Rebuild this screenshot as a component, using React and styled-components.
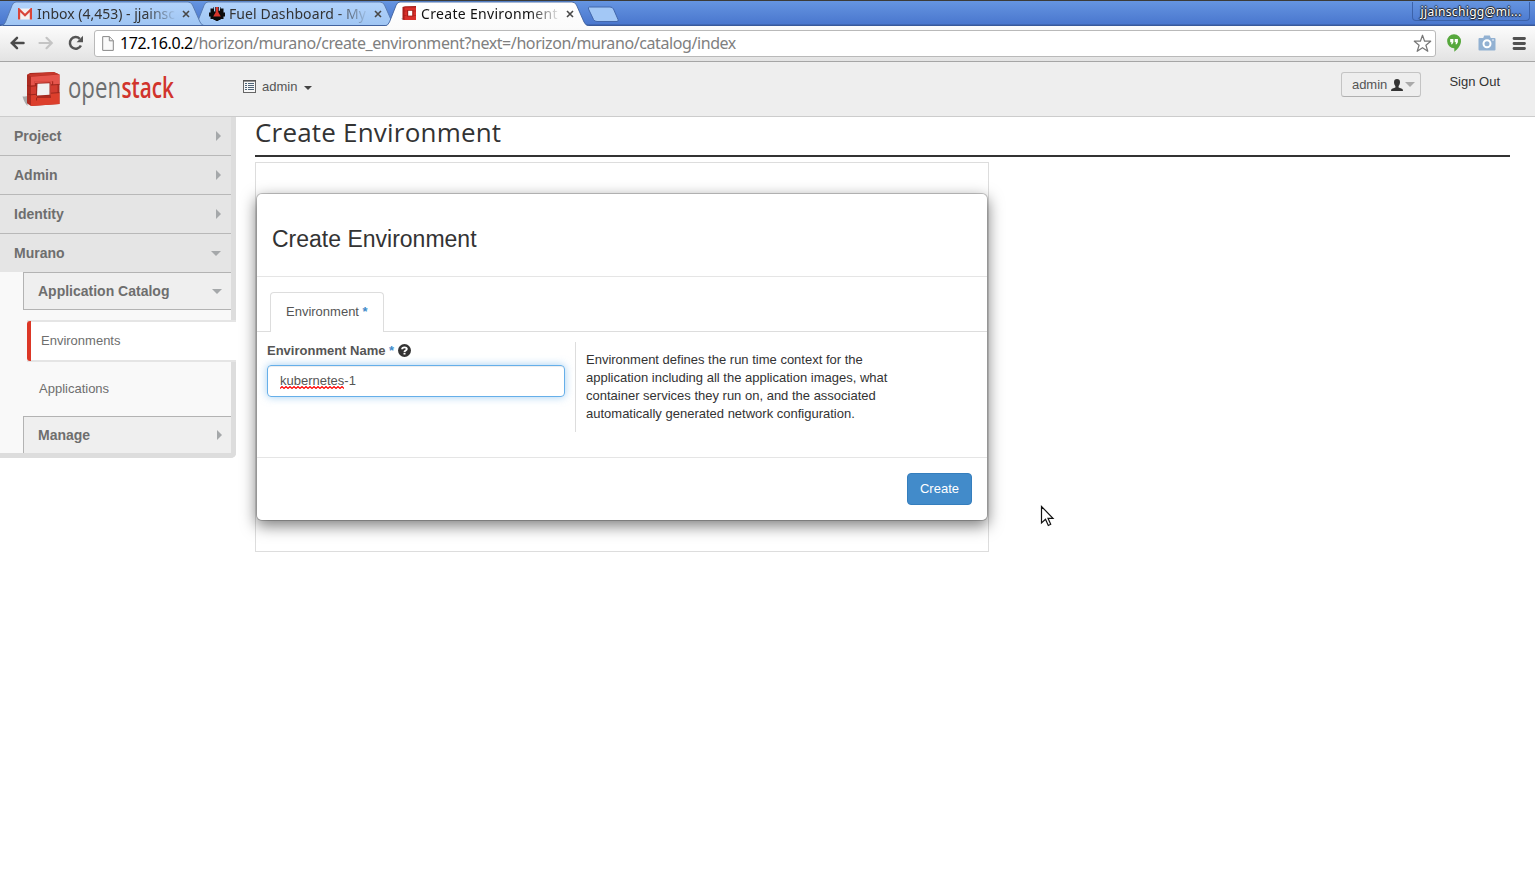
import React from 'react';
import styled, { createGlobalStyle, css } from 'styled-components';

const GlobalStyle = createGlobalStyle`
  *, *::before, *::after { box-sizing: border-box; }
  html, body { margin: 0; padding: 0; background: #fff; }
  body {
    font: 13px/18px "Liberation Sans", Arial, sans-serif;
    color: #333;
    overflow: hidden;
  }
`;

const Screen = styled.div`
  position: relative;
  display: flex;
  flex-direction: column;
  width: 1535px;
  height: 877px;
  overflow: hidden;
  background: #fff;
`;

/* ---------- Browser chrome ---------- */

const TabStrip = styled.div`
  display: flex;
  justify-content: space-between;
  height: 26px;
  padding: 0 5px 0 3px;
  border-top: 1px solid #3c3b37;
  background: linear-gradient(#6595e1, #4a77ce 92%, #38599b 96%);
`;

const Tabs = styled.div`
  display: flex;
`;

const Tab = styled.div`
  position: relative;
  z-index: ${(p) => p.$z};
  display: flex;
  align-items: center;
  width: 204px;
  height: 25px;
  margin-right: -12px;
  padding-left: 14px;
`;

const TabShape = styled.svg`
  position: absolute;
  left: -2px;
  top: 0;
`;

const TabIcon = styled.span`
  position: relative;
  display: flex;
  justify-content: center;
  width: 16px;
  margin-right: 4px;
`;

const TabTitle = styled.span`
  position: relative;
  width: 141px;
  white-space: nowrap;
  font: 14px/20px "Noto Sans", sans-serif;
  letter-spacing: ${(p) => p.$spacing}px;
  color: ${(p) => (p.$active ? '#111' : '#333')};
  mask-image: linear-gradient(90deg, #000 108px, transparent 140px);
`;

const TabClose = styled.svg`
  position: relative;
  margin-left: 4px;
`;

const NewTab = styled.svg`
  margin: 5px 0 0 7px;
`;

const Profile = styled.div`
  height: 19px;
  width: 118px;
  margin-top: 1px;
  border: 1px solid #3c62a9;
  border-top: 0;
  border-radius: 0 0 4px 4px;
  text-align: center;
  white-space: nowrap;
  font: 12px/20px "Noto Sans", sans-serif;
  letter-spacing: 0.35px;
  color: #fff;
  text-shadow: 1px 0 1px #222, -1px 0 1px #222, 0 1px 1px #222, 0 -1px 1px #222;
`;

const Toolbar = styled.div`
  display: flex;
  align-items: center;
  height: 36px;
  padding: 0 8px 0 9px;
  border-bottom: 1px solid #a5a5a5;
  background: linear-gradient(#fcfcfc, #e3e3e3);
`;

const NavButton = styled.span`
  display: flex;
  width: 18px;
  margin: -1px ${(p) => p.$gap}px 0 0;
`;

const AddressBar = styled.div`
  display: flex;
  align-items: center;
  width: 1342px;
  height: 27px;
  padding: 0 3px 0 7px;
  border: 1px solid #b9b9b9;
  border-radius: 3px;
  background: #fff;
`;

const Url = styled.span`
  flex: 1;
  margin: -2px 0 0 6px;
  white-space: nowrap;
  font: 16px/22px "Noto Sans", sans-serif;
  letter-spacing: -0.41px;
  color: #808080;
`;

const Host = styled.span`
  color: #000;
`;

const Extensions = styled.div`
  display: flex;
  flex: 1;
  align-items: center;
  justify-content: space-between;
  padding: 0 1px 1px 11px;
`;

/* ---------- Dashboard header ---------- */

const Header = styled.header`
  display: flex;
  height: 55px;
  border-bottom: 1px solid #ccc;
  background: #eee;
`;

const Logo = styled.svg`
  margin: 8px 0 0 22px;
`;

const ProjectPicker = styled.div`
  display: flex;
  align-items: center;
  height: 20px;
  margin: 14px 0 0 65px;
  line-height: 20px;
  color: #555;
`;

const PickerName = styled.span`
  margin: 2px 7px 0 6px;
`;

const Caret = styled.span`
  width: 0;
  height: 0;
  ${(p) =>
    p.$right
      ? css`
          border-top: ${p.$size}px solid transparent;
          border-bottom: ${p.$size}px solid transparent;
          border-left: ${p.$size}px solid ${p.$color};
        `
      : css`
          border-left: ${p.$size}px solid transparent;
          border-right: ${p.$size}px solid transparent;
          border-top: ${p.$size}px solid ${p.$color};
        `}
`;

const PickerCaret = styled(Caret)`
  margin-top: 3px;
`;

const UserArea = styled.div`
  display: flex;
  align-items: flex-start;
  margin-left: auto;
  padding: 10px 35px 0 0;
`;

const UserButton = styled.div`
  display: flex;
  align-items: center;
  width: 80px;
  height: 25px;
  padding-left: 10px;
  border: 1px solid #c4c4c4;
  border-bottom-color: #b0b0b0;
  border-radius: 3px;
  color: #555;

  svg { margin: 1px 2px 0 4px; }
`;

const SignOut = styled.a`
  margin-left: 28.5px;
  line-height: 20px;
  color: #333;
`;

/* ---------- Body ---------- */

const Body = styled.div`
  display: flex;
  align-items: flex-start;
`;

const Sidebar = styled.nav`
  width: 236px;
  height: 341px;
  border-right: 5px solid #ddd;
  border-bottom: 5px solid #ddd;
  border-bottom-right-radius: 5px;
  background: #f9f9f9;
`;

const PanelHeading = styled.div`
  display: flex;
  align-items: center;
  justify-content: space-between;
  height: ${(p) => (p.$last ? 38 : 39)}px;
  padding: 0 10px 0 14px;
  border-bottom: ${(p) => (p.$last ? 0 : 1)}px solid #b8b8b8;
  background: #e5e5e5;
  font-size: 14px;
  font-weight: bold;
  color: #6e6e6e;
`;

const SubHeading = styled.div`
  display: flex;
  align-items: center;
  justify-content: space-between;
  height: ${(p) => (p.$open ? 38 : 37)}px;
  margin-left: 23px;
  padding: 0 9px 0 14px;
  border: 1px solid #b3b3b3;
  border-right: 0;
  border-bottom-width: ${(p) => (p.$open ? 1 : 0)}px;
  background: #efefef;
  font-size: 14px;
  font-weight: bold;
  color: #6e6e6e;
`;

const SubLinks = styled.div`
  height: 106px;
  padding-top: 10px;
  color: #6e6e6e;
`;

const ActiveLink = styled.a`
  position: relative;
  display: block;
  width: 209px;
  height: 42px;
  margin-left: 27px;
  padding-left: 14px;
  border-top: 2px solid #e5e5e5;
  border-bottom: 2px solid #e5e5e5;
  background: #fff;
  line-height: 38px;

  &::before {
    content: '';
    position: absolute;
    left: 0;
    top: -1px;
    width: 4px;
    height: 40px;
    border-radius: 3px 0 0 3px;
    background: #dc3726;
  }
`;

const PlainLink = styled.a`
  display: block;
  margin-left: 39px;
  line-height: 54px;
`;

const Main = styled.main`
  width: 1255px;
  margin-left: 19px;
`;

const PageTitle = styled.h1`
  height: 40px;
  margin: 0 0 5px;
  border-bottom: 2px solid #333;
  font: 26px/31px "Open Sans", sans-serif;
  letter-spacing: 0.2px;
  color: #333;
`;

const ModalFrame = styled.section`
  width: 734px;
  height: 390px;
  padding: 30px 0;
  border: 1px solid #ddd;
`;

const Modal = styled.div`
  display: flex;
  flex-direction: column;
  height: 328px;
  border: 1px solid rgba(0, 0, 0, 0.2);
  border-radius: 6px;
  background: #fff;
  background-clip: padding-box;
  box-shadow: 0 5px 15px rgba(0, 0, 0, 0.5);
`;

const ModalHeader = styled.div`
  height: 83px;
  padding: 32px 15px 0;
  border-bottom: 1px solid #e5e5e5;
`;

const ModalTitle = styled.h2`
  margin: 0;
  font: 23px/26px "Liberation Sans", Arial, sans-serif;
  color: #333;
`;

const TabRow = styled.div`
  display: flex;
  height: 55px;
  padding: 15px 13px 0;
  border-bottom: 1px solid #ddd;
`;

const FormTab = styled.div`
  width: 114px;
  height: 40px;
  padding-left: 15px;
  border: 1px solid #ddd;
  border-bottom: 0;
  border-radius: 4px 4px 0 0;
  background: #fff;
  line-height: 37px;
  color: #555;
`;

const Required = styled.span`
  font-weight: bold;
  color: #428bca;
`;

const FormBody = styled.div`
  display: flex;
  height: 125px;
  padding: 10px;
`;

const Field = styled.div`
  width: 298px;
`;

const Label = styled.label`
  display: flex;
  align-items: center;
  gap: 4px;
  height: 16px;
  margin-bottom: 7px;
  font-weight: bold;
  color: #555;
`;

const LabelText = styled.span`
  margin-top: 2px;
`;

const TextInput = styled.div`
  display: flex;
  align-items: center;
  height: 32px;
  padding-left: 12px;
  border: 1px solid #66afe9;
  border-radius: 4px;
  box-shadow: inset 0 1px 1px rgba(0, 0, 0, 0.075), 0 0 8px rgba(102, 175, 233, 0.6);
  color: #555;
`;

const Misspelled = styled.span`
  position: relative;
`;

const Squiggle = styled.svg`
  position: absolute;
  left: 0;
  bottom: 1px;
`;

const HelpText = styled.p`
  width: 326px;
  height: 90px;
  margin: 0 0 0 10px;
  padding: 9px 0 0 10px;
  border-left: 1px solid #ddd;
  white-space: nowrap;
  color: #333;
`;

const ModalFooter = styled.div`
  display: flex;
  flex: 1;
  align-items: flex-start;
  justify-content: flex-end;
  padding: 15px;
  border-top: 1px solid #e5e5e5;
`;

const CreateButton = styled.button`
  width: 65px;
  height: 32px;
  padding: 0 0 2px;
  border: 1px solid #357ebd;
  border-radius: 4px;
  background: #428bca;
  font: 13px "Liberation Sans", Arial, sans-serif;
  color: #fff;
`;

const Pointer = styled.svg`
  position: absolute;
  left: 1040px;
  top: 505px;
`;

/* ---------- Icons ---------- */

const MailIcon = () => (
  <svg width="16" height="12" viewBox="0 0 16 12">
    <rect x="1" y="0.5" width="14" height="11" fill="#f4f1f1" />
    <path d="M2.100 11.500V1.500L8 7.200l5.900-5.700v10" fill="none" stroke="#d9453a" strokeWidth="2.2" />
  </svg>
);

const FuelIcon = () => (
  <svg width="16" height="14" viewBox="0 0 16 14">
    <path
      d="M1.500 1.500h3V0h7v1.500h3v4H16v4h-1.500v2.500h-3V13h-2v1h-3v-1h-2v-1h-3V9.500H0v-4h1.500z"
      fill="#0c0c0c"
    />
    <path d="M5 0h6v3.500l-1.200.5V0z" fill="#a9cdf5" />
    <path d="M6.800 0h2.400v5l2.600 4.600H4.200L6.800 5z" fill="#d8362c" />
    <path d="M5 0h1.200v5L5 4z" fill="#a9cdf5" />
  </svg>
);

const StackIcon = () => (
  <svg width="16" height="15" viewBox="0 0 16 15">
    <path d="M0 12.500h2v1.500z" fill="#999" />
    <path d="M1.500 1L4 .3 15 0v14H2.500l-1-.8z" fill="#a81f1a" />
    <path d="M3.500 1.500H15V14H3.500z" fill="#d8302b" />
    <rect x="6" y="4" width="6.500" height="6.500" fill="#a81f1a" />
    <rect x="7.200" y="4.800" width="4" height="4.800" fill="#fff" />
    <path d="M2 5h3.500M2 9.500h3.500M12.500 5H15M12.500 9.500H15" stroke="#a81f1a" strokeWidth="0.600" />
  </svg>
);

const BackIcon = ({ color }) => (
  <svg width="16" height="14" viewBox="0 0 16 14">
    <path d="M14.500 7H3.500M8 1.800L2.800 7 8 12.200" fill="none" stroke={color} strokeWidth="2.500" strokeLinecap="round" />
  </svg>
);

const ForwardIcon = ({ color }) => (
  <svg width="16" height="14" viewBox="0 0 16 14">
    <path d="M1.500 7h11M8.500 1.800L13.700 7l-5.200 5.200" fill="none" stroke={color} strokeWidth="2.200" strokeLinecap="round" />
  </svg>
);

const ReloadIcon = () => (
  <svg width="16" height="16" viewBox="0 0 16 16">
    <path d="M12.900 10.500A5.800 5.800 0 1 1 11.800 3.800" fill="none" stroke="#555" strokeWidth="2.500" />
    <path d="M15 .8v6.400H8.600z" fill="#555" />
  </svg>
);

const PageIcon = () => (
  <svg width="12" height="15" viewBox="0 0 12 15">
    <path d="M.7.6h6.800L11.300 4.500v9.900H.7z" fill="#fafafa" stroke="#888" />
    <path d="M7.300.8v4h4" fill="#eee" stroke="#888" />
  </svg>
);

const StarIcon = () => (
  <svg width="20" height="19" viewBox="0 0 20 19">
    <path
      d="M10.500 1.200l2.100 6h6.100l-4.800 4 1.900 6.100-5.300-3.600-5.300 3.600 1.900-6.100-4.800-4h6.100z"
      fill="#fff"
      stroke="#777"
      strokeWidth="1.200"
      strokeLinejoin="round"
    />
  </svg>
);

const HangoutsIcon = () => (
  <svg width="14" height="18" viewBox="0.500 0 14 18">
    <path d="M7.500.2a7 7 0 0 1 7 7c0 4.200-3.500 8.300-6.700 10.500v-3.500A7 7 0 1 1 7.500.2z" fill="#57a83d" />
    <path d="M3.700 5h3.200v3.200L5.700 10.200H4.500l.6-2H3.700zM8.200 5h3.200v3.200l-1.200 2H9l.6-2H8.200z" fill="#fff" />
  </svg>
);

const CameraIcon = () => (
  <svg width="18" height="16" viewBox="0 0 18 16">
    <path d="M1.500 3h3.700l1-2.500h5.600l1 2.500h3.700q1 0 1 1v10.500q0 1-1 1h-15q-1 0-1-1V4q0-1 1-1z" fill="#92b1d2" />
    <circle cx="9" cy="8.700" r="3.500" fill="#92b1d2" stroke="#fff" strokeWidth="2" />
    <circle cx="15" cy="5" r=".8" fill="#fff" />
  </svg>
);

const MenuIcon = () => (
  <svg width="14" height="13" viewBox="0 0 14 13">
    <path d="M2 1.500h10.500M2 6.500h10.500M2 11.500h10.500" stroke="#505050" strokeWidth="2.800" strokeLinecap="round" />
  </svg>
);

const ListIcon = () => (
  <svg width="13" height="13" viewBox="0 0 13 13">
    <rect x=".5" y=".5" width="12" height="12" fill="#f7f7f7" stroke="#666" />
    <path d="M0 .8h13" stroke="#555" strokeWidth="1.600" />
    <path d="M2 3.500h2M2 5.500h2M2 7.500h2M2 9.500h2M5 3.500h6M5 5.500h6M5 7.500h6M5 9.500h6" stroke="#4d6478" />
  </svg>
);

const PersonIcon = () => (
  <svg width="12" height="12" viewBox="0 0 12 12">
    <path d="M6 0c2 0 3 1.200 3 3.200S8 6.500 7.600 7v1.500L11 9.800q1 .5 1 2.200H0q0-1.700 1-2.200l3.400-1.300V7C4 6.500 3 5.200 3 3.200S4 0 6 0z" fill="#333" />
  </svg>
);

const QuestionIcon = () => (
  <svg width="13" height="13" viewBox="0 0 13 13">
    <circle cx="6.500" cy="6.500" r="6.500" fill="#333" />
    <path d="M4.100 5.300Q4.200 3.400 6.500 3.400t2.300 1.700Q8.800 6 7.500 6.600 6.500 7 6.500 8" fill="none" stroke="#fff" strokeWidth="1.900" />
    <rect x="5.500" y="8.800" width="2" height="1.700" fill="#fff" />
  </svg>
);

const OpenstackLogo = () => (
  <Logo width="156" height="44" viewBox="0 0 156 44">
    <path d="M.5 26.500q2 0 5-.5v10q-3-3-5-9.500z" fill="#a9a9a9" />
    <path d="M5 4.800L8 3l24-1 5.500 2.500v29.500L9 36l-4-2.800z" fill="#ab2a20" />
    <path d="M5.500 4.500L31 2l6 2.300L9 6.500z" fill="#c5372b" />
    <path d="M9 6.800l28.500-2.200v10.200l-6.300.5v-4H12.500v4.200H9z" fill="#e5544b" />
    <path d="M9 15.500h5v9H9zM29 15h6.500v8.500H29z" fill="#d23c30" />
    <path d="M9 24.500h6V28h14v-5h8.500v11L9 36z" fill="#dc3f2c" />
    <path d="M12.500 11.200H30V14l-1 1v10.500H14V16l-1.500-1z" fill="#e5544b" />
    <path d="M13 13l15.500-.8V26H14V16h-1z" fill="#a3281e" />
    <path d="M15.500 13.800l12-.6v11.500l-12.500.8z" fill="#f1f1f1" />
    <path d="M5 15.500l4 .8 5-.5M5 24l4 .8 5-.5M29 15l8.500-.6M29 23.200l8.500-.6M14.500 27.500v3" stroke="#96241a" strokeWidth=".9" fill="none" />
    <text
      x="46"
      y="27.500"
      fontFamily="'Open Sans', sans-serif"
      fontSize="29"
      textLength="53"
      lengthAdjust="spacingAndGlyphs"
      fill="#6c6e70"
    >
      open
    </text>
    <text
      x="99.500"
      y="27.500"
      fontFamily="'Open Sans', sans-serif"
      fontSize="29"
      fontWeight="600"
      textLength="52.500"
      lengthAdjust="spacingAndGlyphs"
      fill="#d1342c"
    >
      stack
    </text>
  </Logo>
);

/* ---------- Composition ---------- */

function BrowserTab({ title, icon, active, z, spacing }) {
  return (
    <Tab $z={z}>
      <TabShape width="208" height="25" viewBox="0 0 208 25">
        <defs>
          <linearGradient id={`tab${z}`} x1="0" y1="0" x2="0" y2="1">
            <stop offset="0" stopColor={active ? '#ffffff' : '#b2d3fb'} />
            <stop offset="1" stopColor={active ? '#fbfbfb' : '#9fc5f3'} />
          </linearGradient>
        </defs>
        <path
          d="M0 25Q3 24.500 4.500 21L11 4.500Q12.200 1 15 1H187Q190 1 191.500 4L199 21Q200.500 24.500 204 25"
          fill={`url(#tab${z})`}
          stroke={active ? '#40629f' : '#5577ad'}
          strokeWidth=".9"
        />
        {!active && <path d="M2 24.500h202" stroke="#41629e" />}
      </TabShape>
      <TabIcon>{icon}</TabIcon>
      <TabTitle $active={active} $spacing={spacing}>{title}</TabTitle>
      <TabClose width="8" height="8" viewBox="0 0 8 8">
        <path d="M1 1l6 6M7 1L1 7" stroke="#484848" strokeWidth="1.600" />
      </TabClose>
    </Tab>
  );
}

const PANELS = ['Project', 'Admin', 'Identity'];

export default function App() {
  return (
    <Screen>
      <GlobalStyle />
      <TabStrip>
        <Tabs>
          <BrowserTab title="Inbox (4,453) - jjainsc" icon={<MailIcon />} z={2} spacing={0} />
          <BrowserTab title="Fuel Dashboard - My" icon={<FuelIcon />} z={1} spacing={0.1} />
          <BrowserTab title="Create Environment" icon={<StackIcon />} z={3} spacing={0.32} active />
          <NewTab width="34" height="17" viewBox="0 0 34 17">
            <path
              d="M3.500 1H24Q26.500 1 27.500 3L32 13.500Q32.800 15.500 31 15.500H11Q8.500 15.500 7.500 13.500L2.500 3Q2 1 3.500 1z"
              fill="#a3c8f6"
              stroke="#4368ac"
            />
          </NewTab>
        </Tabs>
        <Profile>jjainschigg@mi...</Profile>
      </TabStrip>

      <Toolbar>
        <NavButton $gap={11}><BackIcon color="#4a4a4a" /></NavButton>
        <NavButton $gap={12}><ForwardIcon color="#c4c4c4" /></NavButton>
        <NavButton $gap={8}><ReloadIcon /></NavButton>
        <AddressBar>
          <PageIcon />
          <Url><Host>172.16.0.2</Host>/horizon/murano/create_environment?next=/horizon/murano/catalog/index</Url>
          <StarIcon />
        </AddressBar>
        <Extensions>
          <HangoutsIcon />
          <CameraIcon />
          <MenuIcon />
        </Extensions>
      </Toolbar>

      <Header>
        <OpenstackLogo />
        <ProjectPicker>
          <ListIcon />
          <PickerName>admin</PickerName>
          <PickerCaret $size={4} $color="#444" />
        </ProjectPicker>
        <UserArea>
          <UserButton>
            admin
            <PersonIcon />
            <Caret $size={5} $color="#aaa" />
          </UserButton>
          <SignOut>Sign Out</SignOut>
        </UserArea>
      </Header>

      <Body>
        <Sidebar>
          {PANELS.map((name) => (
            <PanelHeading key={name}>
              {name}
              <Caret $right $size={5} $color="#a5a8aa" />
            </PanelHeading>
          ))}
          <PanelHeading $last>
            Murano
            <Caret $size={5} $color="#a5a8aa" />
          </PanelHeading>
          <SubHeading $open>
            Application Catalog
            <Caret $size={5} $color="#a5a8aa" />
          </SubHeading>
          <SubLinks>
            <ActiveLink>Environments</ActiveLink>
            <PlainLink>Applications</PlainLink>
          </SubLinks>
          <SubHeading>
            Manage
            <Caret $right $size={5} $color="#a5a8aa" />
          </SubHeading>
        </Sidebar>

        <Main>
          <PageTitle>Create Environment</PageTitle>
          <ModalFrame>
            <Modal>
              <ModalHeader>
                <ModalTitle>Create Environment</ModalTitle>
              </ModalHeader>
              <TabRow>
                <FormTab>Environment <Required>*</Required></FormTab>
              </TabRow>
              <FormBody>
                <Field>
                  <Label>
                    <LabelText>Environment Name <Required>*</Required></LabelText>
                    <QuestionIcon />
                  </Label>
                  <TextInput>
                    <Misspelled>
                      kubernetes
                      <Squiggle width="64" height="3" viewBox="0 0 64 3">
                        <path
                          d={'M0 2.500' + 'l2-2 2 2'.repeat(16)}
                          fill="none"
                          stroke="#f00"
                          strokeWidth="1.100"
                        />
                      </Squiggle>
                    </Misspelled>
                    -1
                  </TextInput>
                </Field>
                <HelpText>
                  Environment defines the run time context for the<br />
                  application including all the application images, what<br />
                  container services they run on, and the associated<br />
                  automatically generated network configuration.
                </HelpText>
              </FormBody>
              <ModalFooter>
                <CreateButton>Create</CreateButton>
              </ModalFooter>
            </Modal>
          </ModalFrame>
        </Main>
      </Body>

      <Pointer width="15" height="22" viewBox="0 0 15 22">
        <path
          d="M1.500 1.500V18l4-3.700L8.300 20.500l2.400-1.200L8 13.300h5z"
          fill="#fff"
          stroke="#111"
          strokeWidth="1.200"
        />
      </Pointer>
    </Screen>
  );
}
